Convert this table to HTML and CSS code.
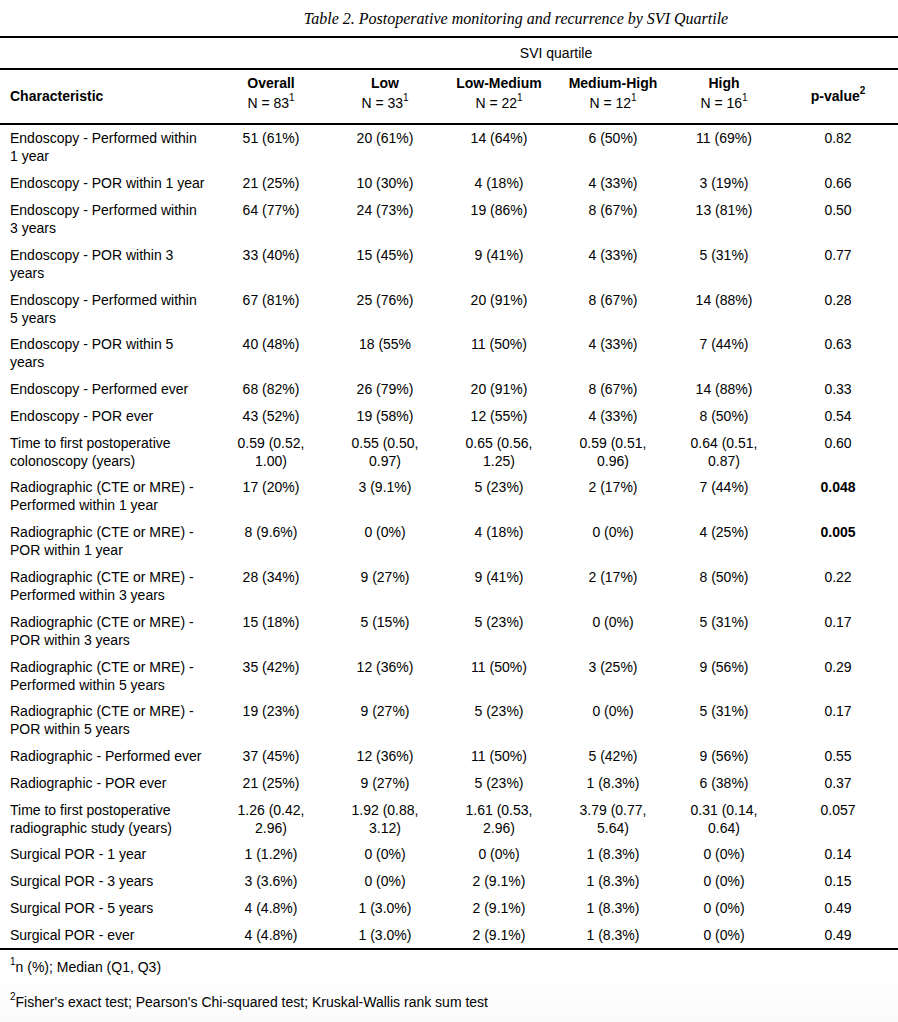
FILE: index.html
```html
<!DOCTYPE html>
<html lang="en">
<head>
<meta charset="utf-8">
<title>Table 2</title>
<link rel="stylesheet" href="styles.css">
</head>
<body>
<div class="caption">Table 2. Postoperative monitoring and recurrence by SVI Quartile</div>
<table class="gt">
  <colgroup>
    <col class="c-char"><col class="c-num"><col class="c-num"><col class="c-num"><col class="c-num"><col class="c-high"><col class="c-p">
  </colgroup>
  <thead>
    <tr class="spanner-row">
      <th></th><th></th>
      <th colspan="4" class="spanner">SVI quartile</th>
      <th></th>
    </tr>
    <tr class="col-head">
      <th class="left single">Characteristic</th>
      <th>Overall<br><span class="n">N = 83<sup>1</sup></span></th>
      <th>Low<br><span class="n">N = 33<sup>1</sup></span></th>
      <th>Low-Medium<br><span class="n">N = 22<sup>1</sup></span></th>
      <th>Medium-High<br><span class="n">N = 12<sup>1</sup></span></th>
      <th>High<br><span class="n">N = 16<sup>1</sup></span></th>
      <th class="single">p-value<sup>2</sup></th>
    </tr>
  </thead>
  <tbody>
    <tr><td>Endoscopy - Performed within 1 year</td><td>51 (61%)</td><td>20 (61%)</td><td>14 (64%)</td><td>6 (50%)</td><td>11 (69%)</td><td>0.82</td></tr>
    <tr><td>Endoscopy - POR within 1 year</td><td>21 (25%)</td><td>10 (30%)</td><td>4 (18%)</td><td>4 (33%)</td><td>3 (19%)</td><td>0.66</td></tr>
    <tr><td>Endoscopy - Performed within 3 years</td><td>64 (77%)</td><td>24 (73%)</td><td>19 (86%)</td><td>8 (67%)</td><td>13 (81%)</td><td>0.50</td></tr>
    <tr><td>Endoscopy - POR within 3 years</td><td>33 (40%)</td><td>15 (45%)</td><td>9 (41%)</td><td>4 (33%)</td><td>5 (31%)</td><td>0.77</td></tr>
    <tr><td>Endoscopy - Performed within 5 years</td><td>67 (81%)</td><td>25 (76%)</td><td>20 (91%)</td><td>8 (67%)</td><td>14 (88%)</td><td>0.28</td></tr>
    <tr><td>Endoscopy - POR within 5 years</td><td>40 (48%)</td><td>18 (55%</td><td>11 (50%)</td><td>4 (33%)</td><td>7 (44%)</td><td>0.63</td></tr>
    <tr><td>Endoscopy - Performed ever</td><td>68 (82%)</td><td>26 (79%)</td><td>20 (91%)</td><td>8 (67%)</td><td>14 (88%)</td><td>0.33</td></tr>
    <tr><td>Endoscopy - POR ever</td><td>43 (52%)</td><td>19 (58%)</td><td>12 (55%)</td><td>4 (33%)</td><td>8 (50%)</td><td>0.54</td></tr>
    <tr><td>Time to first postoperative colonoscopy (years)</td><td>0.59 (0.52, 1.00)</td><td>0.55 (0.50, 0.97)</td><td>0.65 (0.56, 1.25)</td><td>0.59 (0.51, 0.96)</td><td>0.64 (0.51, 0.87)</td><td>0.60</td></tr>
    <tr><td>Radiographic (CTE or MRE) - Performed within 1 year</td><td>17 (20%)</td><td>3 (9.1%)</td><td>5 (23%)</td><td>2 (17%)</td><td>7 (44%)</td><td class="bold">0.048</td></tr>
    <tr><td>Radiographic (CTE or MRE) - POR within 1 year</td><td>8 (9.6%)</td><td>0 (0%)</td><td>4 (18%)</td><td>0 (0%)</td><td>4 (25%)</td><td class="bold">0.005</td></tr>
    <tr><td>Radiographic (CTE or MRE) - Performed within 3 years</td><td>28 (34%)</td><td>9 (27%)</td><td>9 (41%)</td><td>2 (17%)</td><td>8 (50%)</td><td>0.22</td></tr>
    <tr><td>Radiographic (CTE or MRE) - POR within 3 years</td><td>15 (18%)</td><td>5 (15%)</td><td>5 (23%)</td><td>0 (0%)</td><td>5 (31%)</td><td>0.17</td></tr>
    <tr><td>Radiographic (CTE or MRE) - Performed within 5 years</td><td>35 (42%)</td><td>12 (36%)</td><td>11 (50%)</td><td>3 (25%)</td><td>9 (56%)</td><td>0.29</td></tr>
    <tr><td>Radiographic (CTE or MRE) - POR within 5 years</td><td>19 (23%)</td><td>9 (27%)</td><td>5 (23%)</td><td>0 (0%)</td><td>5 (31%)</td><td>0.17</td></tr>
    <tr><td>Radiographic - Performed ever</td><td>37 (45%)</td><td>12 (36%)</td><td>11 (50%)</td><td>5 (42%)</td><td>9 (56%)</td><td>0.55</td></tr>
    <tr><td>Radiographic - POR ever</td><td>21 (25%)</td><td>9 (27%)</td><td>5 (23%)</td><td>1 (8.3%)</td><td>6 (38%)</td><td>0.37</td></tr>
    <tr><td>Time to first postoperative radiographic study (years)</td><td>1.26 (0.42, 2.96)</td><td>1.92 (0.88, 3.12)</td><td>1.61 (0.53, 2.96)</td><td>3.79 (0.77, 5.64)</td><td>0.31 (0.14, 0.64)</td><td>0.057</td></tr>
    <tr><td>Surgical POR - 1 year</td><td>1 (1.2%)</td><td>0 (0%)</td><td>0 (0%)</td><td>1 (8.3%)</td><td>0 (0%)</td><td>0.14</td></tr>
    <tr><td>Surgical POR - 3 years</td><td>3 (3.6%)</td><td>0 (0%)</td><td>2 (9.1%)</td><td>1 (8.3%)</td><td>0 (0%)</td><td>0.15</td></tr>
    <tr><td>Surgical POR - 5 years</td><td>4 (4.8%)</td><td>1 (3.0%)</td><td>2 (9.1%)</td><td>1 (8.3%)</td><td>0 (0%)</td><td>0.49</td></tr>
    <tr><td>Surgical POR - ever</td><td>4 (4.8%)</td><td>1 (3.0%)</td><td>2 (9.1%)</td><td>1 (8.3%)</td><td>0 (0%)</td><td>0.49</td></tr>
  </tbody>
  <tfoot>
    <tr><td colspan="7"><sup>1</sup>n (%); Median (Q1, Q3)</td></tr>
    <tr><td colspan="7"><sup>2</sup>Fisher's exact test; Pearson's Chi-squared test; Kruskal-Wallis rank sum test</td></tr>
  </tfoot>
</table>
</body>
</html>
```

FILE: styles.css
```css
html {
  background: linear-gradient(to bottom, #ffffff 975px, #fafafa 1022px) no-repeat;
  min-height: 1022px;
}
body {
  margin: 0;
  font-family: "Liberation Sans", Arial, sans-serif;
  font-size: 14px;
  color: #000;
  width: 898px;
}
.caption {
  font-family: "Liberation Serif", "Times New Roman", serif;
  font-style: italic;
  font-size: 16px;
  line-height: 18px;
  text-align: center;
  padding: 10px 0 8px 134px;
}
.gt {
  width: 898px;
  border-collapse: collapse;
  table-layout: fixed;
  border-top: 2px solid #000;
}
.gt tbody {
  border-bottom: 2px solid #000;
}
.c-char { width: 214px; }
.c-num { width: 114px; }
.c-high { width: 108px; }
.c-p { width: 120px; }

.gt th, .gt td {
  padding: 4.4px 12px;
  line-height: 18px;
  text-align: center;
  vertical-align: top;
  font-weight: normal;
}
.gt tbody td:first-child {
  text-align: left;
  padding-left: 10px;
  padding-right: 7px;
}
.gt td.bold { font-weight: bold; }
.spanner-row th {
  border-bottom: 2px solid #000;
  height: 30px;
  padding: 0;
  vertical-align: middle;
}
.spanner-row .spanner { padding-left: 6px; }
.col-head th {
  font-weight: bold;
  line-height: 20px;
  padding: 3px 5px 10px;
  vertical-align: middle;
  border-bottom: 2px solid #000;
}
.col-head th.single { padding-top: 6px; padding-bottom: 7px; }
.col-head th.left { text-align: left; padding-left: 10px; }
.col-head .n { font-weight: normal; }
sup {
  font-size: 10px;
  line-height: 0;
  vertical-align: 7px;
}
.gt tfoot td {
  text-align: left;
  padding: 8px 10px 9px;
  line-height: 18px;
}
```
